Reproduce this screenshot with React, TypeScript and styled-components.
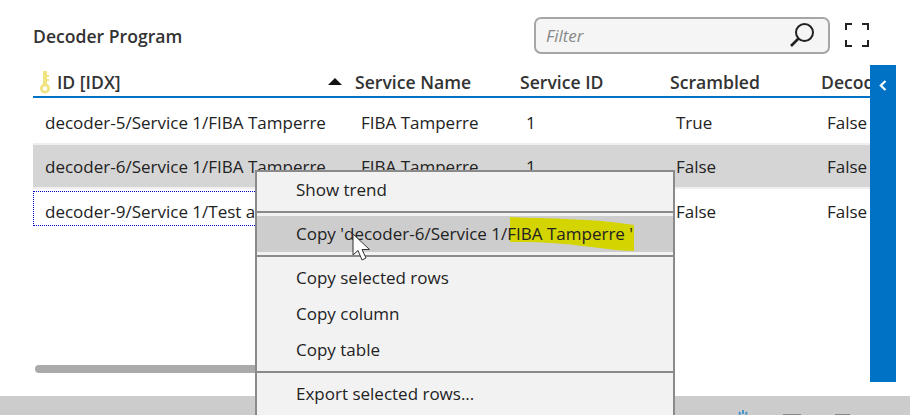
import React from "react";
import styled, { createGlobalStyle } from "styled-components";

const columns = "316px 165px 150px 151px 160px";

const rows = [
  { id: "decoder-5/Service 1/FIBA Tamperre", name: "FIBA Tamperre", sid: "1", scrambled: "True", decoded: "False", state: "plain" },
  { id: "decoder-6/Service 1/FIBA Tamperre", name: "FIBA Tamperre", sid: "1", scrambled: "False", decoded: "False", state: "selected" },
  { id: "decoder-9/Service 1/Test a", name: "", sid: "", scrambled: "False", decoded: "False", state: "focused" }
];

export default function App() {
  return (
    <Page>
      <GlobalStyle />
      <Body>
        <Panel>
          <Toolbar>
            <Title>Decoder Program</Title>
            <FilterBox>
              <FilterText>Filter</FilterText>
              <SearchIcon />
            </FilterBox>
            <ExpandIcon />
          </Toolbar>
          <Table>
            <HeaderRow>
              <KeyHeader>
                <KeyIcon />
                ID [IDX]
                <SortArrow />
              </KeyHeader>
              <HeaderCell>Service Name</HeaderCell>
              <HeaderCell>Service ID</HeaderCell>
              <HeaderCell>Scrambled</HeaderCell>
              <HeaderCell>Decoded</HeaderCell>
            </HeaderRow>
            {rows.map((row) => (
              <Row key={row.id} $state={row.state}>
                <IdCell $focused={row.state === "focused"}>{row.id}</IdCell>
                <Cell>{row.name}</Cell>
                <Cell>{row.sid}</Cell>
                <Cell>{row.scrambled}</Cell>
                <Cell>{row.decoded}</Cell>
              </Row>
            ))}
            <ScrollTrack>
              <ScrollThumb />
            </ScrollTrack>
          </Table>
        </Panel>
        <SideTab>
          <Chevron />
        </SideTab>
      </Body>
      <Footer>
        <Spinner />
        <FooterGlyph $width={18} />
        <FooterGlyph $width={15} />
      </Footer>
      <Menu>
        <MenuItem>Show trend</MenuItem>
        <MenuRule />
        <MenuItem $active>
          <Marker />
          <MenuLabel>Copy 'decoder-6/Service 1/FIBA Tamperre '</MenuLabel>
        </MenuItem>
        <MenuRule />
        <MenuItem>Copy selected rows</MenuItem>
        <MenuItem>Copy column</MenuItem>
        <MenuItem>Copy table</MenuItem>
        <MenuRule />
        <MenuItem>Export selected rows...</MenuItem>
      </Menu>
      <Cursor />
    </Page>
  );
}

// Icons

function SearchIcon() {
  return (
    <IconSvg width="26" height="26" viewBox="0 0 26 26">
      <circle cx="15.5" cy="10.5" r="8.5" fill="none" stroke="#222" strokeWidth="2" />
      <path d="M9.5 16.5 L2 24" stroke="#222" strokeWidth="2.6" />
    </IconSvg>
  );
}

function ExpandIcon() {
  return (
    <ExpandSvg width="24" height="24" viewBox="0 0 24 24">
      <path
        d="M1 7 V1 H7 M17 1 H23 V7 M1 17 V23 H7 M17 23 H23 V17"
        fill="none"
        stroke="#222"
        strokeWidth="2"
      />
    </ExpandSvg>
  );
}

function KeyIcon() {
  return (
    <KeySvg width="10" height="23" viewBox="0 0 10 23">
      <circle cx="5" cy="17.5" r="3.6" fill="none" stroke="#efe480" strokeWidth="2.8" />
      <path d="M3 0 H7 V14 H3 Z M7 4 H9 V6 H7 Z M7 8 H9 V10 H7 Z" fill="#efe480" />
    </KeySvg>
  );
}

function SortArrow() {
  return (
    <SortSvg width="14" height="7" viewBox="0 0 14 7">
      <path d="M7 0 L14 7 H0 Z" fill="#111" />
    </SortSvg>
  );
}

function Chevron() {
  return (
    <svg width="8" height="11" viewBox="0 0 8 11">
      <path d="M6.5 1 L1.8 5.5 L6.5 10" fill="none" stroke="#fff" strokeWidth="2.2" />
    </svg>
  );
}

function Marker() {
  return (
    <MarkerSvg width="124" height="34" viewBox="0 0 124 34">
      <path d="M0 0 C40 2 80 1 124 8 V34 C90 33 60 24 0 25 Z" fill="#d4d400" />
    </MarkerSvg>
  );
}

function Cursor() {
  return (
    <CursorSvg width="20" height="29" viewBox="0 0 20 29">
      <path
        d="M1 1 V22 L6 17.5 L10 27 L14 25 L10 16.5 H17.5 Z"
        fill="#fff"
        stroke="#333"
        strokeWidth="1"
      />
    </CursorSvg>
  );
}

function Spinner() {
  return (
    <SpinnerSvg width="12" height="10" viewBox="0 0 12 10">
      <path d="M6 0 V4 M2 2 L3.5 4.5 M10 2 L8.5 4.5" stroke="#3a8fd0" strokeWidth="1.8" />
    </SpinnerSvg>
  );
}

const GlobalStyle = createGlobalStyle`
  html, body {
    margin: 0;
    padding: 0;
    background: #fff;
  }
  body {
    font-family: "Open Sans", "Noto Sans", sans-serif;
    color: #222;
  }
`;

const Page = styled.div`
  position: relative;
  width: 910px;
  height: 415px;
  overflow: hidden;
  display: flex;
  flex-direction: column;
`;

const Body = styled.div`
  height: 396px;
  flex: none;
  display: flex;
  padding: 0 14px 14px 33px;
  box-sizing: border-box;
`;

const Panel = styled.div`
  width: 837px;
  display: flex;
  flex-direction: column;
  min-width: 0;
`;

const Toolbar = styled.div`
  height: 65px;
  flex: none;
  display: flex;
  align-items: flex-start;
  padding-top: 17px;
  box-sizing: border-box;
`;

const Title = styled.div`
  flex: 1;
  font-size: 17.6px;
  font-weight: 600;
  line-height: 38px;
  color: #333;
`;

const FilterBox = styled.div`
  width: 296px;
  height: 37px;
  box-sizing: border-box;
  display: flex;
  align-items: center;
  justify-content: space-between;
  padding: 0 13px 2px 10px;
  background: #f5f5f5;
  border: 2px solid #a6a6a6;
  border-radius: 7px;
`;

const FilterText = styled.span`
  font-size: 17px;
  font-style: italic;
  color: #888;
  padding-top: 2px;
`;

const IconSvg = styled.svg`
  display: block;
`;

const ExpandSvg = styled.svg`
  display: block;
  margin: 6px 1px 0 15px;
`;

const Table = styled.div`
  flex: 1;
  min-height: 0;
  display: flex;
  flex-direction: column;
  overflow: hidden;
`;

const HeaderRow = styled.div`
  display: grid;
  grid-template-columns: ${columns};
  height: 33px;
  flex: none;
  align-items: center;
  border-bottom: 2px solid #0072c6;
  padding-top: 3px;
  box-sizing: border-box;
  width: 942px;
`;

const HeaderCell = styled.div`
  padding-left: 6px;
  font-size: 17.6px;
  font-weight: 600;
  white-space: nowrap;
  color: #333;
`;

const KeyHeader = styled(HeaderCell)`
  display: flex;
  align-items: center;
  position: relative;
  padding-left: 7px;
`;

const KeySvg = styled.svg`
  display: block;
  margin-right: 7px;
`;

const SortSvg = styled.svg`
  position: absolute;
  left: 295px;
  top: 8px;
`;

const Row = styled.div<{ $state: string }>`
  --cell-top: ${(p) => (p.$state === "focused" ? "5px" : p.$state === "selected" ? "1px" : "2px")};
  display: grid;
  grid-template-columns: ${columns};
  grid-template-rows: 100%;
  width: 942px;
  box-sizing: border-box;
  height: ${(p) => (p.$state === "focused" ? "35px" : p.$state === "selected" ? "42px" : "43px")};
  margin-top: ${(p) => (p.$state === "focused" ? "4px" : "2px")};
  background: ${(p) => (p.$state === "selected" ? "#d5d5d5" : "#fff")};
  box-shadow: ${(p) => (p.$state === "selected" ? "0 0 0 2px #efefef" : "none")};
`;

const Cell = styled.div`
  padding: var(--cell-top) 0 0 12px;
  font-size: 17px;
  box-sizing: border-box;
  white-space: nowrap;
  color: #222;
  display: flex;
  align-items: center;
`;

const IdCell = styled(Cell)<{ $focused?: boolean }>`
  padding-left: ${(p) => (p.$focused ? "11px" : "12px")};
  border: ${(p) => (p.$focused ? "1px dotted #0000c8" : "none")};
`;

const ScrollTrack = styled.div`
  margin-top: auto;
  margin-bottom: 9px;
  padding-left: 2px;
`;

const ScrollThumb = styled.div`
  width: 400px;
  height: 8px;
  border-radius: 4px;
  background: #aaa;
`;

const SideTab = styled.div`
  width: 26px;
  flex: none;
  margin-top: 65px;
  background: #0072c6;
  display: flex;
  justify-content: center;
  align-items: flex-start;
  padding-top: 15px;
  box-sizing: border-box;
`;

const Footer = styled.div`
  flex: 1;
  background: #ccc;
  display: flex;
  align-items: flex-start;
  padding-left: 737px;
`;

const SpinnerSvg = styled.svg`
  display: block;
  margin: 14px 34px 0 0;
`;

const FooterGlyph = styled.div<{ $width: number }>`
  width: ${(p) => p.$width}px;
  height: 2px;
  margin: 18px 34px 0 0;
  background: #888;
`;

const Menu = styled.div`
  position: absolute;
  left: 255px;
  top: 170px;
  width: 420px;
  height: 260px;
  box-sizing: border-box;
  background: #f2f2f2;
  border: 2px solid #8a8a8a;
`;

const MenuItem = styled.div<{ $active?: boolean }>`
  position: relative;
  height: 36px;
  line-height: 36px;
  padding-left: 39px;
  font-size: 17px;
  white-space: nowrap;
  color: #222;
  background: ${(p) => (p.$active ? "#cdcdcd" : "transparent")};
`;

const MenuLabel = styled.span`
  position: relative;
`;

const MenuRule = styled.div`
  height: 2px;
  margin: 3px 0;
  background: #8a8a8a;
`;

const MarkerSvg = styled.svg`
  position: absolute;
  left: 253px;
  top: 1px;
`;

const CursorSvg = styled.svg`
  position: absolute;
  left: 352px;
  top: 233px;
`;
